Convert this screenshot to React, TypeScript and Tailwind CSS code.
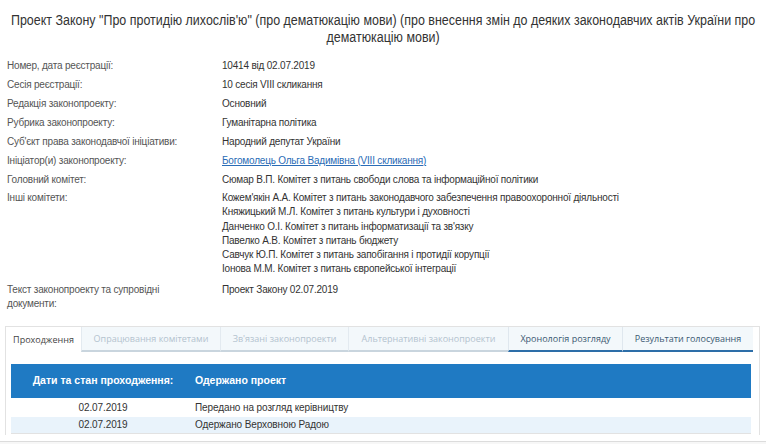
import React from "react";

const rows: [string, React.ReactNode][] = [
  ["Номер, дата реєстрації:", "10414 від 02.07.2019"],
  ["Сесія реєстрації:", "10 сесія VIII скликання"],
  ["Редакція законопроекту:", "Основний"],
  ["Рубрика законопроекту:", "Гуманітарна політика"],
  ["Суб'єкт права законодавчої ініціативи:", "Народний депутат України"],
  [
    "Ініціатор(и) законопроекту:",
    <a className="text-[#2a6cb6] underline" href="#">
      Богомолець Ольга Вадимівна (VIII скликання)
    </a>,
  ],
  ["Головний комітет:", "Сюмар В.П. Комітет з питань свободи слова та інформаційної політики"],
];

const committees = [
  "Кожем'якін А.А. Комітет з питань законодавчого забезпечення правоохоронної діяльності",
  "Княжицький М.Л. Комітет з питань культури і духовності",
  "Данченко О.І. Комітет з питань інформатизації та зв'язку",
  "Павелко А.В. Комітет з питань бюджету",
  "Савчук Ю.П. Комітет з питань запобігання і протидії корупції",
  "Іонова М.М. Комітет з питань європейської інтеграції",
];

const tabs: { label: string; w: string; kind: "active" | "faded" | "dark" }[] = [
  { label: "Проходження", w: "w-[75px]", kind: "active" },
  { label: "Опрацювання комітетами", w: "w-[139px]", kind: "faded" },
  { label: "Зв'язані законопроекти", w: "w-[128px]", kind: "faded" },
  { label: "Альтернативні законопроекти", w: "w-[160px]", kind: "faded" },
  { label: "Хронологія розгляду", w: "w-[114px]", kind: "dark" },
  { label: "Результати голосування", w: "w-[131px]", kind: "dark" },
];

export default function App() {
  return (
    <div className="w-[766px] h-[444px] bg-white overflow-hidden flex flex-col font-['Liberation_Sans',Arial,sans-serif]">
      <div className="pt-[12px] flex justify-center">
        <h1 className="shrink-0 whitespace-nowrap text-center text-[14px] leading-[17px] text-[#333] font-normal scale-x-[0.89]">
          Проект Закону "Про протидію лихослів'ю" (про дематюкацію мови) (про внесення змін до деяких законодавчих актів України про
          <br />
          дематюкацію мови)
        </h1>
      </div>

      <div className="mt-[10px] pl-[7px] grid grid-cols-[215px_1fr] text-[10px] tracking-[-0.2px] text-[#333]">
        {rows.map(([l, v], i) => (
          <React.Fragment key={i}>
            <div className="leading-[19px] text-[#555]">{l}</div>
            <div className="leading-[19px]">{v}</div>
          </React.Fragment>
        ))}
        <div className="pt-[2px] pb-[4px] leading-[14.3px] text-[#555]">Інші комітети:</div>
        <div className="pt-[2px] pb-[4px] leading-[14.3px]">
          {committees.map((c) => (
            <div key={c}>{c}</div>
          ))}
        </div>
        <div className="pt-[2px] leading-[14px] text-[#555] pr-[40px]">Текст законопроекту та супровідні документи:</div>
        <div className="pt-[2px] leading-[14px]">Проект Закону 02.07.2019</div>
      </div>

      <div className="mt-[15px] ml-[5px] mr-[6px] border border-[#e2e2e2] border-b-0 pb-[1px]">
        <div className="flex h-[25px] font-['Open_Sans',sans-serif]">
          {tabs.map((t) => (
            <div
              key={t.label}
              className={
                t.w +
                " flex items-center justify-center text-[9px] " +
                (t.kind === "active"
                  ? "bg-white text-[#444]"
                  : t.kind === "faded"
                  ? "bg-[#f3f8fb] text-[#b3c3cf] border-l border-[#e3eaf0] border-b-2 border-b-[#c9d5de]"
                  : "bg-[#f3f8fb] text-[#3b5872] border-l border-[#dfe7ee] border-b-2 border-b-[#2d6ea8]")
              }
            >
              {t.label}
            </div>
          ))}
        </div>
        <div className="pt-[12px] pl-[5px] pr-[8px]">
          <div className="h-[34px] bg-[#1f7ac3] flex items-center text-white font-bold text-[10.5px]">
            <div className="w-[184px] text-center">Дати та стан проходження:</div>
            <div>Одержано проект</div>
          </div>
          <div className="text-[10px] tracking-[-0.1px] text-[#333] border-b border-[#e2e2e2]">
            <div className="flex h-[19px] items-center">
              <div className="w-[184px] text-center">02.07.2019</div>
              <div>Передано на розгляд керівництву</div>
            </div>
            <div className="flex h-[16px] items-center bg-[#e9f3fb]">
              <div className="w-[184px] text-center">02.07.2019</div>
              <div>Одержано Верховною Радою</div>
            </div>
          </div>
        </div>
      </div>
      <div className="mt-[6px] flex-1 border-t border-[#dcdcdc] bg-[#f7f7f7]" />
    </div>
  );
}
